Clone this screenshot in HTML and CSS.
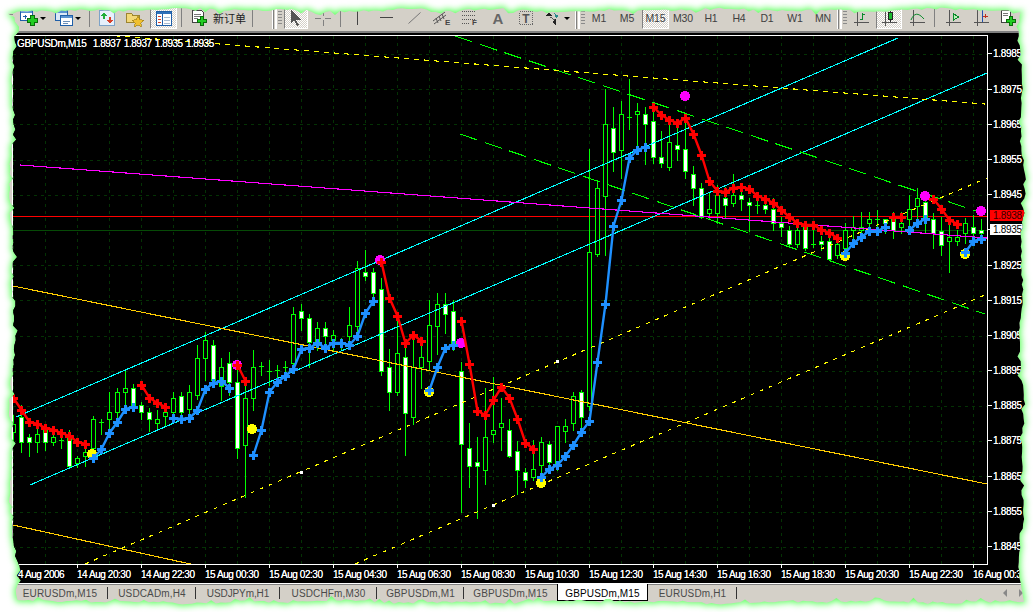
FILE: index.html
```html
<!DOCTYPE html>
<html lang="zh">
<head>
  <meta charset="UTF-8" />
  <title>GBPUSDm,M15</title>
  <link rel="stylesheet" href="styles.css">
</head>
<body>
<div class="shot">
  <!-- green glow round the torn edge, points set in chart.js -->
  <svg class="glow" viewBox="0 0 1033 612"><polygon id="glowShape"></polygon></svg>

  <div class="app" id="app">

    <!-- toolbar -->
    <div class="toolbar">
      <span class="grip"></span>
      <div class="tb drop drop-1">
        <svg width="18" height="17" viewBox="0 0 18 17"><rect x=".5" y=".5" width="12" height="10" fill="#fff" stroke="#1f5fa8"/><rect x="1" y="1" width="11" height="2" fill="#5b93d0"/><path d="M3 6h4M5 5v4" stroke="#1f5fa8"/><path d="M10.500 5.500h4v3h3v4h-3v3h-4v-3h-3v-4h3z" fill="#22cc22" stroke="#0b6b0b"/></svg>
        <i class="arrow"></i>
      </div>
      <div class="tb drop drop-2">
        <svg width="18" height="17" viewBox="0 0 18 17"><rect x=".5" y=".5" width="12" height="10" fill="#dbe8f6" stroke="#1f5fa8"/><rect x="1" y="1" width="11" height="2" fill="#5b93d0"/><rect x="5.500" y="5.500" width="12" height="10" fill="#fff" stroke="#1f5fa8"/><rect x="6" y="6" width="11" height="2" fill="#5b93d0"/><path d="M8 11h7M8 13h5" stroke="#6a8fb8"/></svg>
        <i class="arrow"></i>
      </div>
      <span class="sep"></span>
      <div class="tb">
        <svg width="16" height="16" viewBox="0 0 16 16"><rect x=".5" y=".5" width="15" height="15" fill="#e6f0fb" stroke="#7da3c8"/><path d="M5 2l3 4H6v3H4V6H2z" fill="#1fae3a"/><path d="M11 14l-3-4h2V7h2v3h2z" fill="#d8402a"/></svg>
      </div>
      <div class="tb">
        <svg width="18" height="17" viewBox="0 0 18 17"><path d="M.5 3.500h5l1 1.500h7v7h-13z" fill="#f3d878" stroke="#9c8530"/><path d="M12 6l1.800 3.700 4 .6-2.900 2.800.7 4-3.600-1.900-3.600 1.900.7-4-2.900-2.800 4-.6z" fill="#f0c030" stroke="#a08018" stroke-width=".7"/></svg>
      </div>
      <div class="tb pressed pressed-nav">
        <svg width="16" height="15" viewBox="0 0 16 15"><rect x=".5" y=".5" width="15" height="14" fill="#fff" stroke="#1f5fa8"/><rect x="1" y="1" width="14" height="2" fill="#2f6fb8"/><path d="M6.500 3v11" stroke="#1f5fa8"/><path d="M2 5h3M2 8h3M2 11h3" stroke="#d8402a"/><path d="M8 6h6M8 9h6M8 12h6" stroke="#a7bcd4"/></svg>
      </div>
      <span class="sep sep-8"></span>
      <div class="tb order">
        <svg width="16" height="17" viewBox="0 0 16 17"><path d="M.5.500h9l2 2v10h-11z" fill="#fff" stroke="#444"/><path d="M2 4h7M2 6h7M2 8h4" stroke="#777"/><path d="M8.500 6.500h3v3h3v3h-3v3h-3v-3h-3v-3h3z" fill="#22cc22" stroke="#0b6b0b"/></svg>
        <span class="order-text">新订单</span>
      </div>
      <span class="sep sep-4"></span>

      <span class="dsep dsep-a"></span>
      <span class="grip grip-a"></span>
      <div class="tb pressed pressed-cursor">
        <svg width="12" height="16" viewBox="0 0 12 16"><path d="M1 0v13l3-3 3 6 2-1-3-5h5z" fill="#555"/></svg>
      </div>
      <div class="tb tb-cross">
        <svg width="16" height="16" viewBox="0 0 16 16"><path d="M8 0v6M8 10v6M0 8h6M10 8h6" stroke="#808080"/></svg>
      </div>
      <span class="sep"></span>
      <div class="tb"><svg width="2" height="14" viewBox="0 0 2 14"><rect width="1" height="14" fill="#444"/></svg></div>
      <div class="tb"><svg width="13" height="2" viewBox="0 0 13 2"><rect width="13" height="1" fill="#444"/></svg></div>
      <div class="tb"><svg class="smooth" width="13" height="12" viewBox="0 0 13 12"><path d="M.5 11.500l12-11" stroke="#777"/></svg></div>
      <div class="tb">
        <svg width="18" height="16" viewBox="0 0 18 16"><g class="smooth" stroke="#555"><path d="M0 11L12 2M1 14L13 5M3 8l2 5M6 6l2 5M9 4l2 5"/></g><text x="12" y="15" class="ico-letter">E</text></svg>
      </div>
      <div class="tb">
        <svg width="18" height="16" viewBox="0 0 18 16"><path d="M1 1.500h13M1 5.500h13M1 9.500h13M1 13.500h8" stroke="#555" stroke-dasharray="1 1"/><text x="11" y="15" class="ico-letter">F</text></svg>
      </div>
      <div class="tb"><span class="big-a">A</span></div>
      <div class="tb">
        <svg width="14" height="14" viewBox="0 0 14 14"><rect x=".5" y=".5" width="13" height="13" fill="none" stroke="#666" stroke-dasharray="1 1"/><text x="7" y="11.500" class="ico-t">T</text></svg>
      </div>
      <div class="tb drop drop-3">
        <svg width="14" height="15" viewBox="0 0 14 15"><path d="M0 5l3-4 3 4zM6 11l4-3v6z" fill="#222"/><path d="M4 6l5 3" stroke="#555"/><path d="M8 2l5 3-3 2z" fill="#2a8a8a"/></svg>
        <i class="arrow"></i>
      </div>
      <span class="dsep"></span>
      <span class="grip grip-b"></span>

      <div class="tb period">M1</div>
      <div class="tb period">M5</div>
      <div class="tb period pressed pressed-m15">M15</div>
      <div class="tb period">M30</div>
      <div class="tb period">H1</div>
      <div class="tb period">H4</div>
      <div class="tb period">D1</div>
      <div class="tb period">W1</div>
      <div class="tb period">MN</div>
      <span class="dsep"></span>
      <span class="grip grip-b"></span>

      <div class="tb tb-bars">
        <svg width="15" height="16" viewBox="0 0 15 16"><path d="M3.500 0v16M0 12.500h15" stroke="#555"/><path d="M8.500 3v7M6 9h2M9 4h2" stroke="#0a8a2a"/></svg>
      </div>
      <div class="tb pressed pressed-candle">
        <svg width="15" height="16" viewBox="0 0 15 16"><path d="M3.500 0v16M0 12.500h15" stroke="#555"/><path d="M8.500 0v12" stroke="#222"/><rect x="6.500" y="2.500" width="4" height="7" fill="#1ab82e" stroke="#222"/></svg>
      </div>
      <div class="tb tb-line">
        <svg class="smooth" width="15" height="16" viewBox="0 0 15 16"><path d="M3.500 0v16M0 12.500h15" stroke="#555"/><path d="M1 10C4 3 8 2 14 9" stroke="#0a8a2a" fill="none"/></svg>
      </div>
      <span class="sep"></span>
      <div class="tb tb-play">
        <svg width="15" height="16" viewBox="0 0 15 16"><path d="M3.500 0v16M0 12.500h15" stroke="#555"/><path d="M7.500 3.500l5 3.500-5 3z" fill="#b8f0b8" stroke="#0a8a2a"/></svg>
      </div>
      <div class="tb">
        <svg width="15" height="16" viewBox="0 0 15 16"><path d="M3.500 0v16M0 12.500h15" stroke="#555"/><path d="M8.500 0v12" stroke="#2050b0"/><path d="M9 6h5M11.500 4v4" stroke="#c03020"/></svg>
      </div>
      <div class="tb">
        <svg width="16" height="17" viewBox="0 0 16 17"><path d="M.5.500h9v12h-9z" fill="#fff" stroke="#444"/><path d="M2 3h5M2 5h5" stroke="#777"/><path d="M8.500 6.500h3v3h3v3h-3v3h-3v-3h-3v-3h3z" fill="#22cc22" stroke="#0b6b0b"/></svg>
      </div>
    </div>

    <!-- chart and price scale -->
    <div class="chart-row">
      <div class="chart">
        <svg id="plot" class="plot" viewBox="13 36 974 528" width="974" height="528"></svg>
        <div class="chart-title">
          <span class="symbol">GBPUSDm,M15</span>
          <span>1.8937</span><span>1.8937</span><span>1.8935</span><span>1.8935</span>
        </div>
      </div>
      <div class="scale">
        <div class="price">1.8985</div>
        <div class="price">1.8975</div>
        <div class="price">1.8965</div>
        <div class="price">1.8955</div>
        <div class="price">1.8945</div>
        <div class="price bid">1.8935</div>
        <div class="price">1.8925</div>
        <div class="price">1.8915</div>
        <div class="price">1.8905</div>
        <div class="price">1.8895</div>
        <div class="price">1.8885</div>
        <div class="price">1.8875</div>
        <div class="price">1.8865</div>
        <div class="price">1.8855</div>
        <div class="price">1.8845</div>
        <div class="ask">1.8938</div>
      </div>
    </div>

    <!-- time axis -->
    <div class="axis">
      <span class="tick">14 Aug 2006</span>
      <span class="tick">14 Aug 20:30</span>
      <span class="tick">14 Aug 22:30</span>
      <span class="tick">15 Aug 00:30</span>
      <span class="tick">15 Aug 02:30</span>
      <span class="tick">15 Aug 04:30</span>
      <span class="tick">15 Aug 06:30</span>
      <span class="tick">15 Aug 08:30</span>
      <span class="tick">15 Aug 10:30</span>
      <span class="tick">15 Aug 12:30</span>
      <span class="tick">15 Aug 14:30</span>
      <span class="tick">15 Aug 16:30</span>
      <span class="tick">15 Aug 18:30</span>
      <span class="tick">15 Aug 20:30</span>
      <span class="tick">15 Aug 22:30</span>
      <span class="tick">16 Aug 00:30</span>
    </div>

    <!-- chart tabs -->
    <div class="tabs">
      <div class="tab">EURUSDm,M15</div>
      <div class="tab">USDCADm,H4</div>
      <div class="tab">USDJPYm,H1</div>
      <div class="tab">USDCHFm,M30</div>
      <div class="tab">GBPUSDm,M1</div>
      <div class="tab before-active">GBPUSDm,M15</div>
      <div class="tab active">GBPUSDm,M15</div>
      <div class="tab">EURUSDm,H1</div>
      <div class="tab-scroll"><i class="scroll-left"></i><i class="scroll-right"></i></div>
    </div>
  </div>
</div>
<script src="chart.js"></script>
</body>
</html>
```

FILE: styles.css
```css
:root {
  --face: #d4d0c8;
  --shadow: #808080;
  --ink: #404040;
}

html, body {
  margin: 0;
  padding: 0;
  background: #fff;
  overflow: hidden;
}

.shot {
  display: grid;
  width: 1033px;
  height: 612px;
  font-family: "Liberation Sans", Arial, sans-serif;
}

.shot > * {
  grid-area: 1 / 1;
}

.glow {
  width: 1033px;
  height: 612px;
}

.glow polygon {
  fill: #5cff5c;
  stroke: #70ff70;
  stroke-width: 4;
  filter: blur(3px);
}

.app {
  display: flex;
  flex-direction: column;
  width: 1033px;
  height: 612px;
  background: var(--face);
}

/* toolbar */
.toolbar {
  display: flex;
  align-items: flex-start;
  box-sizing: border-box;
  height: 33px;
  padding: 7px 0 0 8px;
  border-bottom: 2px solid var(--shadow);
}

.tb {
  display: flex;
  align-items: center;
  justify-content: center;
  flex: none;
  box-sizing: border-box;
  width: 28px;
  height: 22px;
}

.tb svg {
  display: block;
  flex: none;
  shape-rendering: crispEdges;
}

.tb svg.smooth, .tb .smooth {
  shape-rendering: auto;
}

.drop {
  justify-content: flex-start;
  gap: 2px;
}

.drop-1 { width: 36px; padding-left: 4px; margin-left: 3px; }
.drop-2 { width: 34px; padding-left: 3px; }
.drop-3 { width: 35px; padding-left: 6px; gap: 4px; }

.arrow {
  width: 0;
  height: 0;
  border: 3px solid transparent;
  border-top: 3px solid #000;
  border-bottom: 0;
}

.pressed {
  background: repeating-conic-gradient(#fff 0 25%, var(--face) 0 50%) 0 0 / 2px 2px;
  border-left: 1px solid var(--shadow);
  border-top: 1px solid var(--shadow);
  border-right: 1px solid #fff;
  border-bottom: 1px solid #fff;
}

.pressed-nav { width: 27px; margin-left: 1px; }
.pressed-cursor { width: 24px; margin-left: 2px; }
.pressed-m15 { width: 27px; margin-left: 1px; }
.pressed-candle { width: 26px; margin-left: 1px; }
.tb-cross { margin-left: 1px; }
.tb-line { margin-left: 1px; }
.tb-play { margin-left: 1px; }

.grip {
  flex: none;
  width: 5px;
  height: 18px;
  margin-top: 1px;
  background: repeating-linear-gradient(#8a8a8a 0 1px, var(--face) 1px 3px);
}

.grip-a { width: 4px; margin-left: 1px; }
.grip-b { width: 4px; margin-left: 1px; }

.sep {
  display: flex;
  justify-content: center;
  flex: none;
  width: 7px;
  height: 22px;
}

.sep::before {
  content: "";
  width: 1px;
  height: 20px;
  background: var(--shadow);
}

.sep-8 { width: 8px; }
.sep-4 { width: 4px; }

.dsep {
  flex: none;
  width: 5px;
  height: 22px;
  box-sizing: border-box;
  border-left: 1px solid #fff;
  border-right: 2px solid #fff;
  background: linear-gradient(var(--shadow), var(--shadow)) 0 0 / 1px 100% no-repeat;
}

.dsep-a { margin-left: 18px; }

.order {
  justify-content: flex-start;
  gap: 5px;
  width: 65px;
  padding-left: 7px;
}

.order-text {
  font-family: "Noto Sans CJK SC", sans-serif;
  font-size: 11px;
  color: #222;
}

.ico-letter {
  font-size: 8px;
  font-weight: bold;
  fill: #444;
}

.ico-t {
  font-size: 12px;
  font-weight: bold;
  fill: #555;
  text-anchor: middle;
}

.big-a {
  font-size: 15px;
  font-weight: bold;
  color: #666;
}

.period {
  font-size: 10.500px;
  letter-spacing: -0.1px;
  color: var(--ink);
}

/* chart */
.chart-row {
  display: flex;
  height: 532px;
  padding-top: 2px;
  box-sizing: border-box;
  background: linear-gradient(90deg, var(--face) 12px, #000 12px);
}

.chart {
  position: relative;
  box-sizing: border-box;
  flex: none;
  width: 976px;
  height: 530px;
  margin-left: 12px;
  border: 1px solid #fff;
  background: #000;
}

.plot {
  display: block;
  shape-rendering: crispEdges;
}

.chart-title {
  position: absolute;
  left: 4px;
  top: 2px;
  display: flex;
  gap: 3.200px;
  font-size: 10px;
  line-height: 12px;
  letter-spacing: -0.45px;
  color: #fff;
  text-shadow: 0 0 0.5px #fff;
}

.symbol {
  margin-right: 3px;
  letter-spacing: -0.3px;
}

.scale {
  position: relative;
  flex: 1;
  box-sizing: border-box;
  padding-top: 1.400px;
  color: #fff;
  font-size: 10px;
  letter-spacing: -0.3px;
  text-shadow: 0 0 0.5px #fff;
}

.price {
  position: relative;
  box-sizing: border-box;
  height: 35.200px;
  line-height: 35.200px;
  padding-left: 5px;
  white-space: nowrap;
}

.price::before {
  content: "";
  position: absolute;
  left: 0;
  top: 17px;
  width: 4px;
  height: 1px;
  background: #fff;
}

.bid {
  color: #000;
  text-shadow: none;
  background: linear-gradient(#fff, #fff) 2px 12px / 100% 11px no-repeat;
}

.ask {
  position: absolute;
  left: 2px;
  right: 0;
  top: 175px;
  height: 11px;
  line-height: 11px;
  padding-left: 3px;
  background: #f00;
  color: #300;
  text-shadow: none;
}

/* time axis */
.axis {
  display: flex;
  box-sizing: border-box;
  height: 18px;
  margin-left: 12px;
  padding-left: 1px;
  background: #000;
  color: #fff;
  font-size: 10px;
  letter-spacing: -0.45px;
  line-height: 17px;
  white-space: nowrap;
  text-shadow: 0 0 0.5px #fff;
}

.tick {
  position: relative;
  flex: none;
  width: 64px;
  padding-top: 1px;
}

.tick::before {
  content: "";
  position: absolute;
  left: 0;
  top: 0;
  width: 1px;
  height: 3px;
  background: #fff;
}

/* tabs */
.tabs {
  display: flex;
  flex: 1;
  padding-left: 12px;
  border-top: 1px solid #fff;
  box-shadow: inset 0 1px 0 var(--shadow);
  color: #4a4a4a;
  font-size: 10px;
  letter-spacing: 0.15px;
}

.tab {
  position: relative;
  box-sizing: border-box;
  padding: 1px 0 0;
  height: 17px;
  line-height: 18px;
  text-align: center;
  white-space: nowrap;
}

.tab:nth-child(1) { width: 96px; }
.tab:nth-child(2) { width: 88px; }
.tab:nth-child(3) { width: 84px; letter-spacing: -0.1px; }
.tab:nth-child(4) { width: 97px; }
.tab:nth-child(5) { width: 87px; }
.tab:nth-child(6) { width: 93px; }
.tab:nth-child(7) { width: 91px; }
.tab:nth-child(8) { width: 89px; }

.tab::after {
  content: "";
  position: absolute;
  right: 0;
  top: 3px;
  width: 1px;
  height: 12px;
  background: #333;
}

.tab.before-active::after {
  display: none;
}

.tab.active {
  background: #fff;
  color: #000;
  box-shadow: inset 1px 0 0 #000, inset -1px 0 0 #000, inset 0 -1px 0 #000;
}

.tab.active::after {
  display: none;
}

.tab-scroll {
  display: flex;
  align-items: center;
  gap: 12px;
  height: 18px;
  margin-left: auto;
  padding-right: 10px;
}

.scroll-left, .scroll-right {
  width: 0;
  height: 0;
  border: 4px solid transparent;
}

.scroll-left {
  border-left: 0;
  border-right-color: #888;
}

.scroll-right {
  border-right: 0;
  border-left-color: #888;
}
```

FILE: chart.js
```js
// candles from x=13, 8px apart: high, body top, body bottom, low, white (down bar)
var candles = [
  [415,424,432,440,0],[405,417,442,452,1],[434,437,442,456,1],[428,434,442,452,0],
  [425,430,442,450,1],[432,437,442,445,0],[433,440,440,448,0],[430,438,466,466,1],
  [456,458,463,467,0],[447,452,456,466,0],[416,419,448,452,0],[419,422,422,434,0],
  [392,412,419,430,0],[388,392,412,419,0],[371,388,392,408,0],[384,388,406,410,1],
  [402,405,412,419,1],[408,412,419,431,1],[410,419,423,428,0],[403,412,416,425,0],
  [392,398,412,419,0],[392,396,412,415,1],[385,392,409,415,0],[345,358,395,399,0],
  [332,340,358,380,0],[340,345,380,385,1],[358,367,386,400,0],[352,363,382,395,1],
  [370,382,448,458,1],[385,398,445,497,0],[350,367,398,410,0],[362,366,366,375,0],
  [360,371,371,385,0],[365,370,370,378,0],[361,367,367,372,0],[307,314,363,372,0],
  [304,311,318,330,1],[314,318,342,367,1],[322,328,345,350,0],[322,328,336,345,1],
  [330,335,340,350,0],[338,343,343,350,0],[307,325,336,345,0],[261,268,326,335,0],
  [250,272,276,280,1],[268,272,293,300,1],[278,289,371,375,1],[349,367,392,410,1],
  [313,353,392,395,0],[340,357,413,455,1],[335,367,417,424,0],[340,357,367,388,0],
  [300,325,361,370,0],[293,304,326,354,0],[293,304,314,333,1],[300,311,343,350,1],
  [362,371,444,512,1],[423,448,466,487,1],[437,462,466,518,1],[388,437,470,484,0],
  [377,430,434,442,0],[398,423,427,450,0],[419,430,456,457,1],[441,451,470,494,1],
  [468,472,480,487,1],[440,469,477,480,0],[437,442,465,480,0],[441,444,462,470,1],
  [426,426,465,470,0],[419,426,431,442,0],[392,396,423,430,0],[390,392,417,428,1],
  [149,252,406,410,0],[180,188,254,256,0],[89,124,196,255,0],[107,128,152,171,1],
  [101,114,150,178,0],[79,117,117,129,0],[103,111,114,145,0],[107,114,124,164,1],
  [102,121,157,163,1],[131,157,163,167,1],[125,142,167,170,0],[125,145,149,160,1],
  [113,149,171,178,1],[166,174,188,205,1],[183,188,217,218,1],[193,209,213,218,0],
  [185,195,213,223,0],[187,198,205,217,1],[174,195,203,206,0],[188,195,199,210,1],
  [198,202,205,231,1],[195,205,205,213,0],[198,205,209,213,1],[198,209,223,230,1],
  [217,223,227,236,1],[226,230,244,247,1],[222,230,244,247,0],[224,227,248,250,1],
  [228,244,244,247,0],[236,241,244,250,1],[238,241,259,259,1],[240,244,255,258,0],
  [223,230,248,255,0],[216,227,230,240,0],[212,227,230,237,0],[212,219,223,233,0],
  [210,219,219,235,0],[219,219,223,233,1],[212,219,230,238,1],[212,223,227,233,0],
  [195,209,219,232,0],[188,198,206,219,0],[198,202,219,232,1],[213,219,233,248,1],
  [217,231,245,255,1],[225,237,241,272,0],[230,237,241,245,0],[218,223,233,243,0],
  [215,227,233,242,1],[219,230,233,240,1]
];

// indicator legs: first x, then y per bar
var legs = [
  { c: "#f00", x: 13, y: [398,410,422,424,428,430,433,436,442,444] },
  { c: "#1e90ff", x: 93, y: [458,449,433,422,409,407] },
  { c: "#f00", x: 141, y: [385,398,403,407] },
  { c: "#1e90ff", x: 173, y: [418,419,418,410,389,383,381,388] },
  { c: "#f00", x: 237, y: [365,381] },
  { c: "#1e90ff", x: 253, y: [455,430,392,382,376,369,349,348,343,348,343,343,345,336,313,301] },
  { c: "#f00", x: 381, y: [262,298,316,343,335,341] },
  { c: "#1e90ff", x: 429, y: [390,367,348,345] },
  { c: "#f00", x: 461, y: [321,364,411,415,400,387,398,419,443,449] },
  { c: "#1e90ff", x: 541, y: [477,469,465,456,445,432,421,362,304,226,200,158,150,147] },
  { c: "#f00", x: 653, y: [107,115,120,123,118,134,155,181,191,192,188,187,189,196,199,203,210,217,223,225,225,230,233,238] },
  { c: "#1e90ff", x: 845, y: [253,243,237,231,231,227] },
  { c: "#f00", x: 893, y: [217,217] },
  { c: "#1e90ff", x: 909, y: [230,223,219] },
  { c: "#f00", x: 933, y: [199,209,220,224] },
  { c: "#1e90ff", x: 965, y: [252,241,239] }
];

var plot = document.getElementById("plot");

function add(name, attrs, parent) {
  var el = document.createElementNS("http://www.w3.org/2000/svg", name);
  for (var k in attrs) el.setAttribute(k, attrs[k]);
  (parent || plot).appendChild(el);
  return el;
}

function line(x1, y1, x2, y2, color, dash, width) {
  var attrs = { x1: x1, y1: y1, x2: x2, y2: y2, stroke: color };
  if (dash) attrs["stroke-dasharray"] = dash;
  if (width) attrs["stroke-width"] = width;
  return add("line", attrs);
}

// grid
for (var gx = 13; gx < 987; gx += 32) line(gx + 0.5, 36, gx + 0.5, 564, "#043204", "3 4");
for (var gy = 54; gy < 564; gy += 35.2) line(13, Math.round(gy) + 0.5, 987, Math.round(gy) + 0.5, "#043204", "3 4");

// price lines under the bars
line(13, 216.5, 987, 216.5, "#f00");
line(13, 230.5, 987, 230.5, "#064a06");

// bars
candles.forEach(function (c, i) {
  var x = 13 + i * 8;
  line(x + 0.5, c[0], x + 0.5, c[3] + 1, "#0f0");
  if (c[1] === c[2]) {
    line(x - 2, c[1] + 0.5, x + 3, c[1] + 0.5, "#0f0");
  } else {
    add("rect", { x: x - 1.5, y: c[1] + 0.5, width: 4, height: c[2] - c[1], fill: c[4] ? "#fff" : "#000", stroke: "#0f0" });
  }
});

// drawn objects
line(30, 485, 987, 73, "#0ff", null, 1.1);
line(16, 417, 898, 38, "#0ff", null, 1.1);
line(13, 286, 987, 484, "#fc0", null, 1.1);
line(13, 525, 195, 565, "#fc0", null, 1.1);
line(20, 165, 987, 238, "#f0f", null, 1.1);
line(455, 36, 985, 214, "#0f0", "18 8", 1.1);
line(460, 134, 985, 314, "#0f0", "18 8", 1.1);
line(105, 35, 985, 104, "#ff0", "5 5", 1.1);
line(85, 564, 987, 178, "#ff0", "4 6", 1.1);
line(355, 564, 985, 295, "#ff0", "4 6", 1.1);

// small white marks on the lower channel
[[301, 472], [493, 505], [557, 361]].forEach(function (p) {
  add("rect", { x: p[0] - 1, y: p[1] - 1, width: 3, height: 3, fill: "#fff" });
});

// signal dots
[[92, 454], [252, 429], [429, 392], [541, 483], [845, 256], [965, 254]].forEach(function (p) {
  add("circle", { cx: p[0], cy: p[1], r: 5, fill: "#ff0" });
});
[[380, 260], [461, 343], [237, 365], [685, 96], [925, 196], [981, 211]].forEach(function (p) {
  add("circle", { cx: p[0], cy: p[1], r: 5, fill: "#f0f" });
});

// indicator
legs.forEach(function (leg) {
  var pts = leg.y.map(function (y, i) { return (leg.x + i * 8 + 0.5) + "," + y; }).join(" ");
  add("polyline", { points: pts, fill: "none", stroke: leg.c, "stroke-width": 2.4, "shape-rendering": "auto" });
  leg.y.forEach(function (y, i) {
    var x = leg.x + i * 8;
    add("rect", { x: x - 4, y: y - 1, width: 9, height: 3, fill: leg.c });
    add("rect", { x: x - 1, y: y - 4, width: 3, height: 9, fill: leg.c });
  });
});

// torn edge of the screenshot
var seed = 7;
function rnd() {
  seed = (seed * 16807) % 2147483647;
  return seed / 2147483647;
}

function side(count, from, to, amp, base) {
  var out = [];
  for (var i = 0; i < count; i++) {
    var p = from + (to - from) * i / count;
    var bump = Math.sin(p / 17) * amp + Math.sin(p / 41) * amp + (rnd() < 0.25 ? rnd() * 4 : 0);
    out.push(base(p, bump + rnd() * 2 - 1));
  }
  return out;
}

var edge = []
  .concat(side(210, 8, 1018, 0.8, function (p, j) { return [p, 10 + j]; }))
  .concat(side(120, 12, 586, 1.6, function (p, j) { return [1022 - j, p]; }))
  .concat(side(210, 1024, 14, 0.8, function (p, j) { return [p, 602 - j]; }))
  .concat(side(120, 600, 12, 1.6, function (p, j) {
    return [(p > 560 ? 15 : 12) + j, p];
  }));

document.getElementById("app").style.clipPath = "polygon(" + edge.map(function (p) {
  return p[0].toFixed(1) + "px " + p[1].toFixed(1) + "px";
}).join(",") + ")";
document.getElementById("glowShape").setAttribute("points", edge.map(function (p) {
  return p[0].toFixed(1) + "," + p[1].toFixed(1);
}).join(" "));
```
